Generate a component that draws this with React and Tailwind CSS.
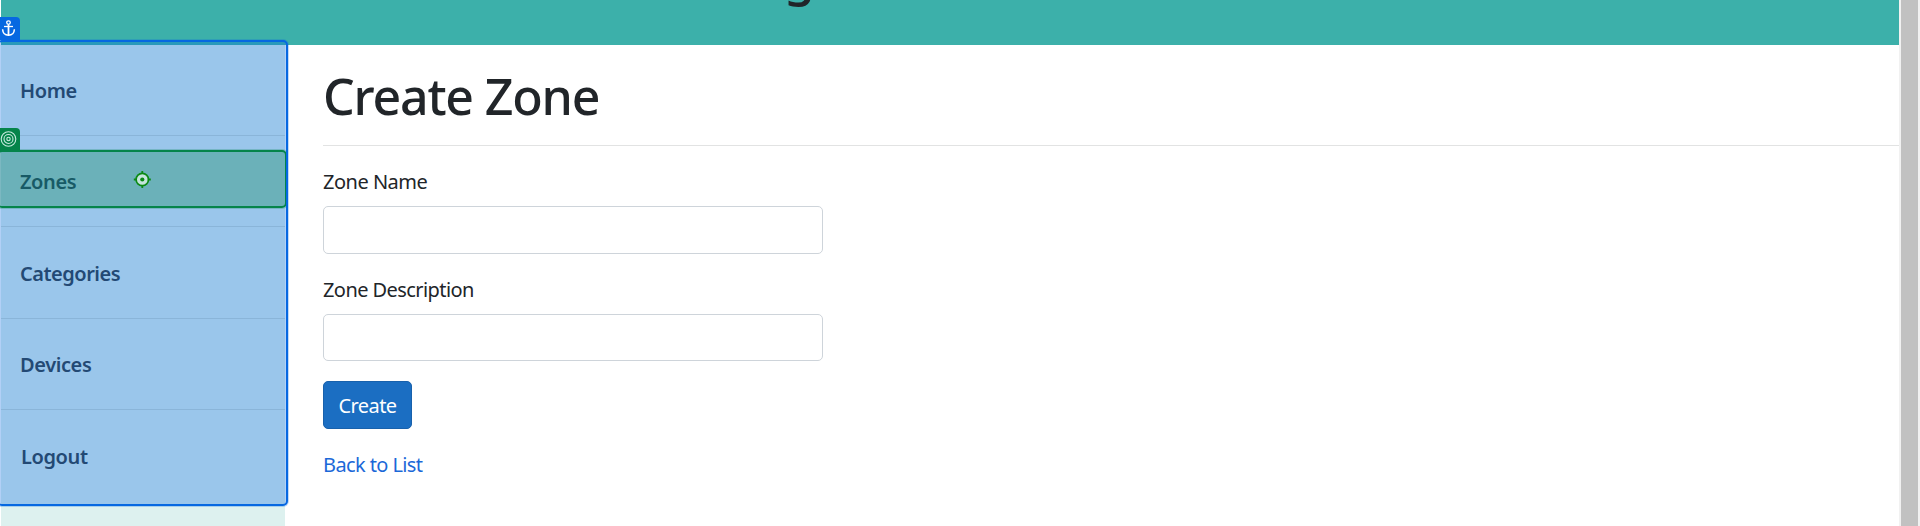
const NAV = [
  { label: 'Home', box: 'h-[91px] pt-[31px] pl-[19px] tracking-[-0.4px]' },
  { label: 'Zones', box: 'h-[91px] pt-[31px] pl-[19px] tracking-[-0.4px]' },
  { label: 'Categories', box: 'h-[92px] pt-[32px] pl-[19px] tracking-[-0.5px]' },
  { label: 'Devices', box: 'h-[91px] pt-[31px] pl-[19px] tracking-[-0.4px]' },
  { label: 'Logout', box: 'h-[116px] pt-[32px] pl-[20px] tracking-[-0.4px]' },
];

function Field({ label, id, labelClass, inputClass }) {
  return (
    <div className="flex flex-col">
      <label htmlFor={id} className={`h-[30px] self-start whitespace-nowrap text-[20px] leading-[30px] ${labelClass}`}>
        {label}
      </label>
      <input id={id} className={`w-[500px] rounded-[5px] border border-[#ced4da] bg-white px-4 outline-none ${inputClass}`} />
    </div>
  );
}

function AnchorBadge() {
  return (
    <div className="absolute left-0 top-[17px] h-[23px] w-[20px] rounded-tr-[4px] bg-[#0668e1]">
      <svg width="20" height="23" viewBox="0 0 20 23" fill="none" stroke="#fff" strokeWidth="1.3">
        <circle cx="8.5" cy="5.6" r="1.8" />
        <path d="M8.5 7.4V18.3" strokeWidth="1.8" />
        <path d="M4 9.5H13" />
        <path d="M2.6 12.3C2.8 16 5.3 18.2 8.5 18.2S14.2 16 14.4 12.3" strokeWidth="1.5" />
      </svg>
    </div>
  );
}

function TargetBadge() {
  return (
    <div className="absolute left-0 top-[128px] h-[23px] w-[20px] rounded-tr-[4px] bg-[#05844a]">
      <svg width="20" height="23" viewBox="0 0 20 23" fill="none" stroke="#c9ebe0" strokeWidth="1.1">
        <circle cx="8.5" cy="11" r="7.3" />
        <circle cx="8.5" cy="11" r="4.5" />
        <circle cx="8.5" cy="11" r="1.7" />
      </svg>
    </div>
  );
}

export default function App() {
  return (
    <div className="relative flex h-[526px] w-[1920px] overflow-hidden bg-white pl-px font-['Noto_Sans','Open_Sans',sans-serif] text-[#212529]">
      <div className="flex w-[1898px] flex-col">
        <header className="h-[45px] shrink-0 overflow-hidden bg-[#3cb0aa] pl-[783px]">
          <h1 className="-mt-[64px] text-[50px] font-medium leading-[80px]">g</h1>
        </header>
        <div className="flex flex-1">
          <nav className="w-[284px] shrink-0 bg-[#ddf1ef] font-semibold text-[#333e46]">
            {NAV.map((item, i) => (
              <div
                key={item.label}
                className={`${item.box} text-[20px] leading-[30px] ${i < 4 ? 'border-b border-[#c6d8d6]' : ''}`}
              >
                <a className="inline-block whitespace-nowrap">{item.label}</a>
              </div>
            ))}
          </nav>
          <main className="flex flex-1 flex-col items-start pl-[38px]">
            <h1 className="mt-[21px] h-[59px] whitespace-nowrap text-[50px] font-medium leading-[60px] tracking-[-1.2px]">
              Create Zone
            </h1>
            <hr className="mt-[20px] w-full border-t border-[#e2e3e3]" />
            <div className="mt-[21px]">
              <Field id="zone-name" label="Zone Name" labelClass="tracking-[-0.5px]" inputClass="mt-[9px] h-[48px]" />
            </div>
            <div className="mt-[21px]">
              <Field id="zone-description" label="Zone Description" labelClass="tracking-[-0.57px]" inputClass="mt-[9px] h-[47px]" />
            </div>
            <button className="mt-[20px] h-[48px] w-[89px] rounded-[5px] border border-[#1861ac] bg-[#1b6ec2] pt-px text-[20px] leading-[30px] tracking-[-0.6px] text-white">
              Create
            </button>
            <a className="mt-[21px] whitespace-nowrap text-[20px] leading-[30px] tracking-[-0.6px] text-[#1b68d8]">Back to List</a>
          </main>
        </div>
      </div>
      <div className="flex w-[21px] bg-[#f1f1f1] pl-[2px]">
        <div className="h-full w-[17px] bg-[#c1c1c1]" />
      </div>

      <div className="absolute -left-[3px] top-[40px] h-[466px] w-[291px] rounded-[5px] bg-[#0065e2]/30" />
      <div className="absolute -left-[3px] top-[150px] h-[58px] w-[290px] rounded-[5px] border-2 border-[#05844a] bg-[#008246]/30 shadow-[0_0_0_1px_rgba(5,132,74,0.25)]" />
      <div className="absolute -left-[3px] top-[40px] h-[466px] w-[291px] rounded-[5px] border-2 border-[#0668e1] shadow-[0_0_0_1px_rgba(6,104,225,0.25)]" />
      <AnchorBadge />
      <TargetBadge />
      <svg className="absolute left-[133px] top-[170px]" width="19" height="19" viewBox="0 0 19 19" fill="none">
        <circle cx="9.3" cy="9.5" r="6.2" fill="#c5e5dc" stroke="#0b8a14" strokeWidth="1.7" />
        <circle cx="9.3" cy="9.5" r="2.1" fill="#0b8a14" />
        <path d="M9.3 1V4M9.3 15V18M.8 9.5H3.8M14.8 9.5H17.8" stroke="#0b8a14" strokeWidth="1.8" />
      </svg>
    </div>
  );
}
